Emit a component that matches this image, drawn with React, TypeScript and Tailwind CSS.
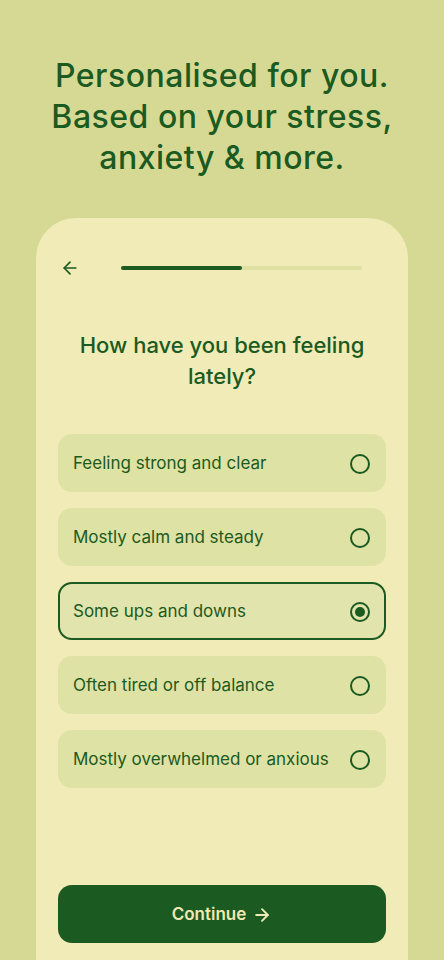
import React, { useState } from 'react';

const OPTIONS = [
  'Feeling strong and clear',
  'Mostly calm and steady',
  'Some ups and downs',
  'Often tired or off balance',
  'Mostly overwhelmed or anxious',
];

const Radio = ({ checked }: { checked: boolean }) => (
  <span className="flex h-[20px] w-[20px] items-center justify-center rounded-full border-2 border-[#1b5a20]">
    {checked && <span className="h-[10px] w-[10px] rounded-full bg-[#1b5a20]" />}
  </span>
);

export default function App() {
  const [selected, setSelected] = useState(2);

  return (
    <div
      className="flex h-[960px] w-full flex-col items-center overflow-hidden bg-[#d6d994] text-[#1b5a20]"
      style={{ fontFamily: 'Inter, "Noto Sans", sans-serif' }}
    >
      <h1 className="mt-[55px] text-center text-[32px] font-medium leading-[41px] tracking-[0.5px]">
        Personalised for you.
        <br />
        Based on your stress,
        <br />
        anxiety &amp; more.
      </h1>

      <div className="mt-[40px] flex w-[372px] flex-1 flex-col rounded-t-[40px] bg-[#f0ebb7] px-[22px] pt-[38px]">
        {/* Header */}
        <div className="flex h-[24px] items-center">
          <button className="flex h-[24px] w-[24px] items-center justify-center">
            <svg width="20" height="20" viewBox="0 0 24 24" fill="none" stroke="#1b5a20" strokeWidth="2" strokeLinecap="round" strokeLinejoin="round">
              <path d="M19 12H5" />
              <path d="M12 19l-7-7 7-7" />
            </svg>
          </button>
          <div className="ml-[39px] h-[4px] w-[241px] rounded-full bg-[#dfe1a3]">
            <div className="h-full w-1/2 rounded-full bg-[#1b5a20]" />
          </div>
        </div>

        {/* Question */}
        <h2 className="mt-[50px] text-center text-[22px] font-medium leading-[31px]">
          How have you been feeling
          <br />
          lately?
        </h2>

        {/* Options */}
        <div className="mt-[42px] flex flex-col gap-[16px]">
          {OPTIONS.map((opt, i) => (
            <button
              key={opt}
              onClick={() => setSelected(i)}
              className={`flex h-[58px] items-center justify-between rounded-[14px] pt-[1px] text-left text-[17px] ${
                selected === i
                  ? 'border-2 border-[#1b5a20] bg-[#e2e4ad] pl-[13px] pr-[14px]'
                  : 'bg-[#dfe2a5] pl-[15px] pr-[16px]'
              }`}
            >
              <span>{opt}</span>
              <Radio checked={selected === i} />
            </button>
          ))}
        </div>

        {/* Continue */}
        <button className="mt-[97px] flex h-[58px] items-center justify-center gap-[6px] rounded-[14px] bg-[#1b5a20] pt-[1px] text-[17px] font-semibold text-[#efe9b5]">
          Continue
          <svg width="20" height="20" viewBox="0 0 24 24" fill="none" stroke="#efe9b5" strokeWidth="2.3" strokeLinecap="round" strokeLinejoin="round">
            <path d="M5 12h14" />
            <path d="M12 5l7 7-7 7" />
          </svg>
        </button>
      </div>
    </div>
  );
}
